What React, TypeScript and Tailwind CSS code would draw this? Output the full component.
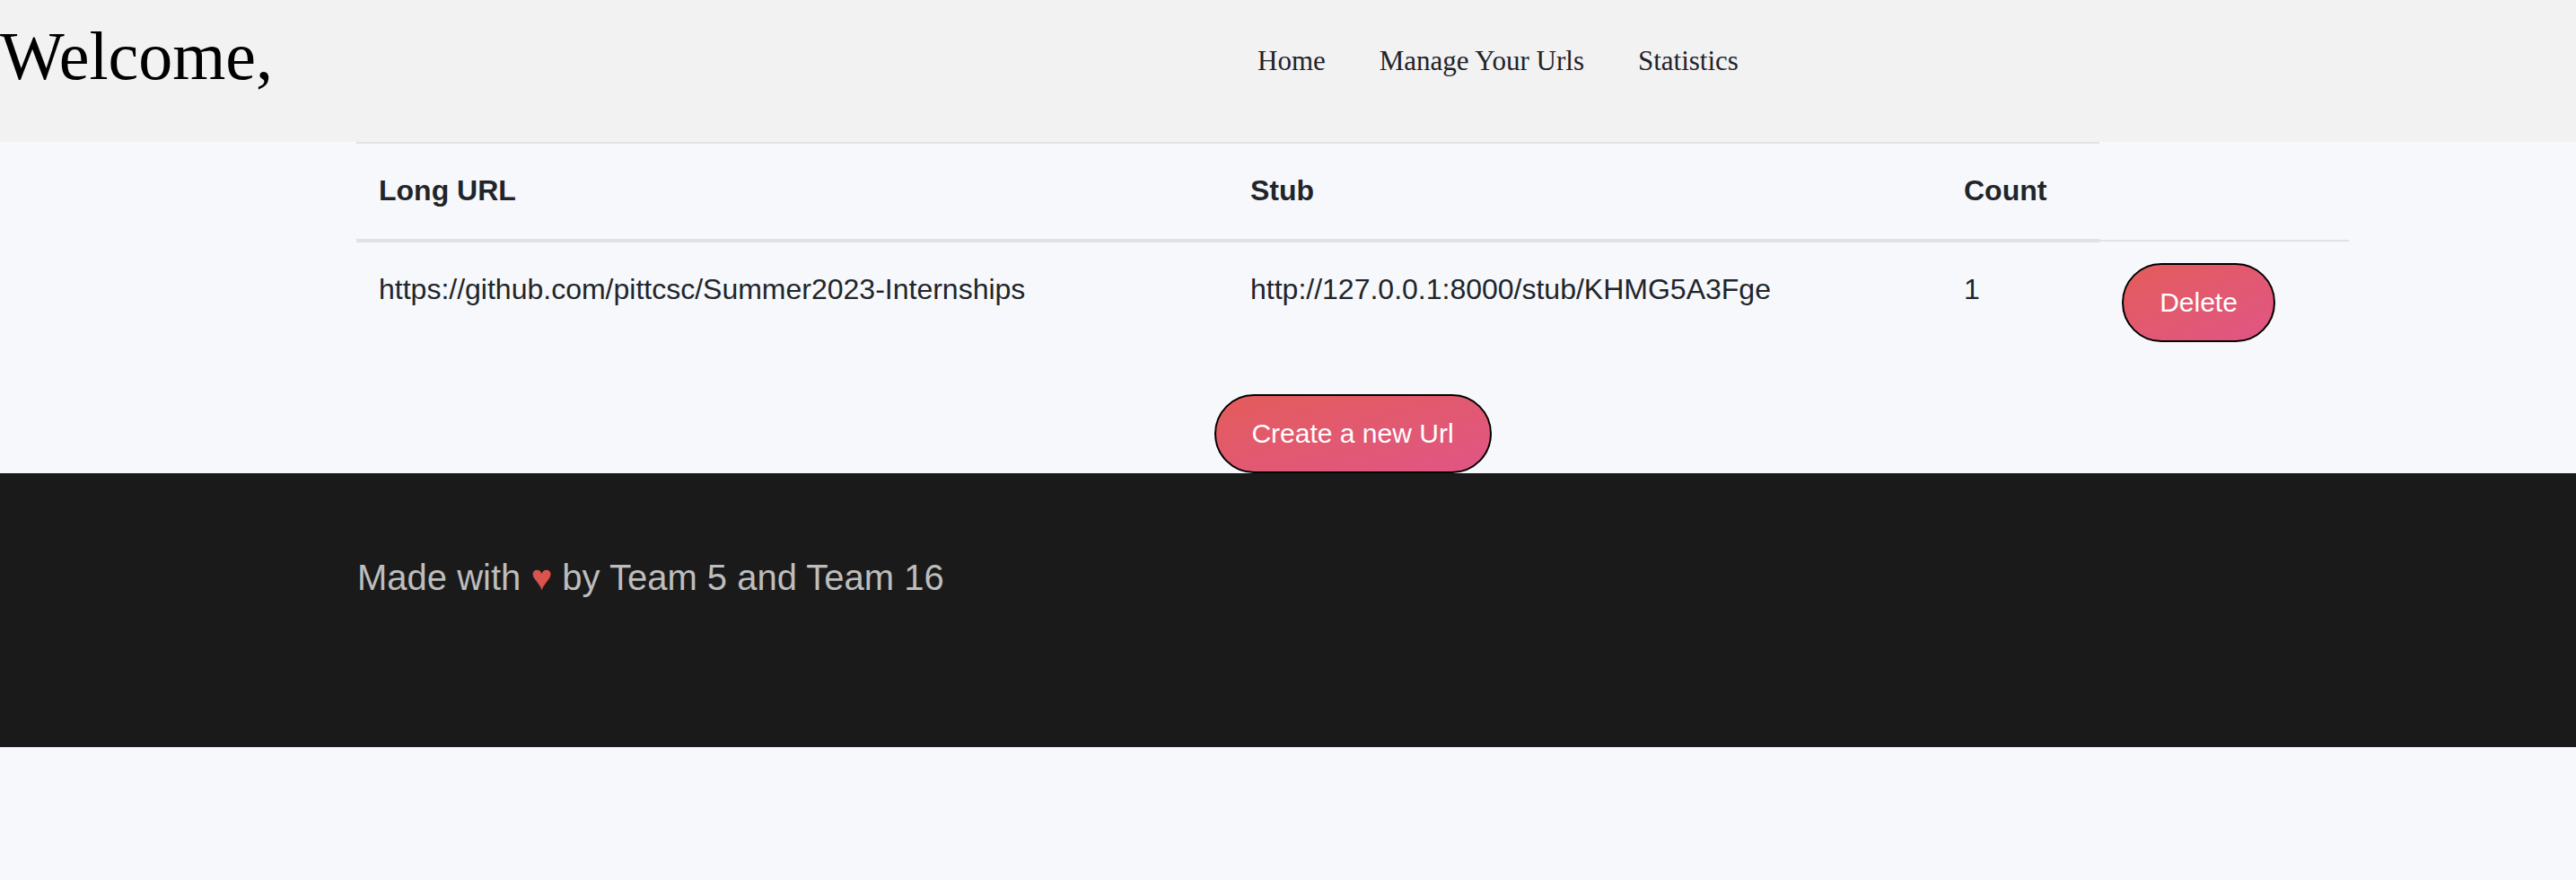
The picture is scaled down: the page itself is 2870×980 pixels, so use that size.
const serif = "font-['Liberation_Serif','Times_New_Roman',serif]";
const sans = "font-['Liberation_Sans',Arial,sans-serif]";

const rows = [
  {
    longUrl: 'https://github.com/pittcsc/Summer2023-Internships',
    stub: 'http://127.0.0.1:8000/stub/KHMG5A3Fge',
    count: 1,
  },
];

function PillButton({ children, className = '' }: { children: React.ReactNode; className?: string }) {
  return (
    <button
      className={`h-[88px] rounded-full border-2 border-black bg-gradient-to-br from-[#e45c5a] to-[#e05585] text-[30px] leading-none text-white ${sans} ${className}`}
    >
      {children}
    </button>
  );
}

export default function App() {
  return (
    <div className="min-h-[980px] bg-[#f7f8fc]">
      <header className="flex h-[158px] bg-[#f2f2f2]">
        <div className="w-[1401px] shrink-0 pt-[24px]">
          <h1 className={`${serif} text-[76px] leading-none text-black`}>Welcome,</h1>
        </div>
        <nav className={`${serif} flex gap-[60px] pt-[52px] text-[31px] leading-none text-[#1f2329]`}>
          <a>Home</a>
          <a>Manage Your Urls</a>
          <a>Statistics</a>
        </nav>
      </header>

      <main className={`${sans} ml-[397px] w-[2220px] text-[32px] leading-[48px] text-[#212529]`}>
        <div className="flex">
          <div className="w-[971px] border-t-2 border-b-4 border-[#dee2e6] px-[25px] pt-[28px] pb-[30px] font-bold">Long URL</div>
          <div className="w-[795px] border-t-2 border-b-4 border-[#dee2e6] px-[25px] pt-[28px] pb-[30px] font-bold">Stub</div>
          <div className="w-[176px] border-t-2 border-b-4 border-[#dee2e6] px-[25px] pt-[28px] pb-[30px] font-bold">Count</div>
          <div className="h-[111px] w-[278px] border-b-2 border-[#dee2e6]" />
        </div>

        {rows.map((r) => (
          <div key={r.stub} className="flex">
            <div className="w-[971px] px-[25px] pt-[28px]">{r.longUrl}</div>
            <div className="w-[795px] px-[25px] pt-[28px]">{r.stub}</div>
            <div className="w-[176px] px-[25px] pt-[28px]">{r.count}</div>
            <div className="w-[278px] px-[25px] pt-[23px] pb-[22px]">
              <PillButton className="w-[171px]">Delete</PillButton>
            </div>
          </div>
        ))}

        <div className="mt-[36px] flex justify-center">
          <PillButton className="w-[309px]">Create a new Url</PillButton>
        </div>
      </main>

      <footer className="h-[305px] bg-[#1a1a1a] pl-[398px] pt-[86px]">
        <p className={`${sans} text-[40px] leading-[60px] text-[#bdbdbd]`}>
          Made with <span className="text-[#d9534f]">♥</span> by Team 5 and Team 16
        </p>
      </footer>
    </div>
  );
}
